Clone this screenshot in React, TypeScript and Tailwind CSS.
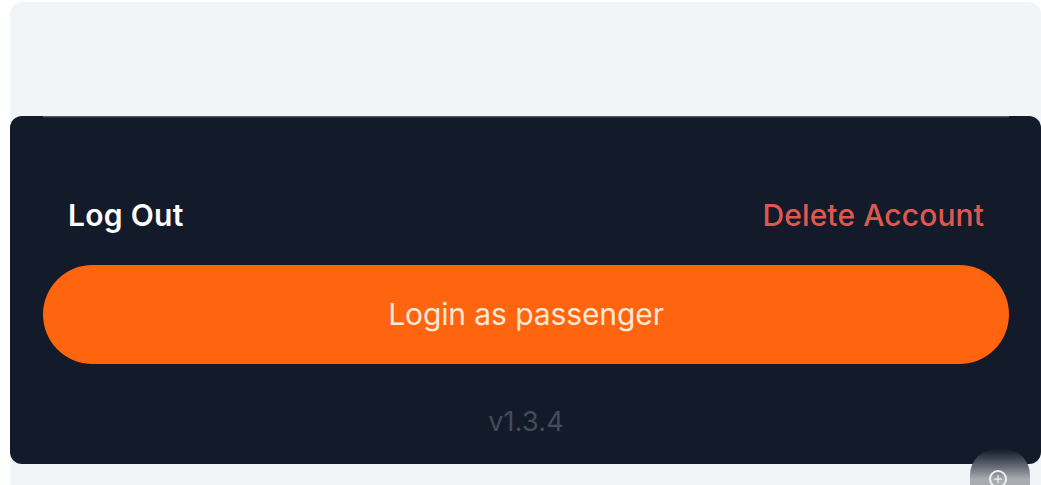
import { Plus } from "lucide-react";

export default function App() {
  return (
    <div className="w-[1041px] h-[485px] bg-white overflow-hidden pl-[10px] pt-[2px] font-['Inter',sans-serif]">
      <div className="relative h-[483px] bg-[#f1f5f8] rounded-t-[12px] flex flex-col">
        <div className="h-[114px] shrink-0" />
        <div className="h-[348px] shrink-0 bg-[#131a2a] rounded-[12px] pl-[33px] pr-[32px] flex flex-col">
          <div className="h-[2px] shrink-0 bg-gradient-to-b from-[#6b7078] to-[#131a2a]" />
          <div className="mt-[77px] flex justify-between items-center h-[40px] pl-[25px] pr-[25px]">
            <span className="text-[30px] leading-[40px] font-semibold tracking-[0.3px] text-white">Log Out</span>
            <span className="text-[30px] leading-[40px] font-medium tracking-[0.1px] text-[#df5850]">Delete Account</span>
          </div>
          <div className="mt-[30px] h-[99px] rounded-full bg-[#ff640f] flex items-center justify-center text-[30px] tracking-[-0.1px] text-[#ffe9d6]">
            Login as passenger
          </div>
          <div className="mt-[40px] text-center text-[27px] leading-[36px] tracking-[0.2px] text-[#454c58]">v1.3.4</div>
        </div>
        <div className="absolute left-[960px] top-[447px] w-[60px] h-[60px] rounded-t-[26px] bg-gradient-to-b from-[#131a2a] to-[#a9acb1] to-[50%] flex justify-center pt-[21px] pr-[4px]">
          <span className="w-[18px] h-[18px] rounded-full border-2 border-[#f1f1f1] flex items-center justify-center">
            <Plus className="w-[12px] h-[12px] text-[#f1f1f1]" strokeWidth={2.5} />
          </span>
        </div>
      </div>
    </div>
  );
}
